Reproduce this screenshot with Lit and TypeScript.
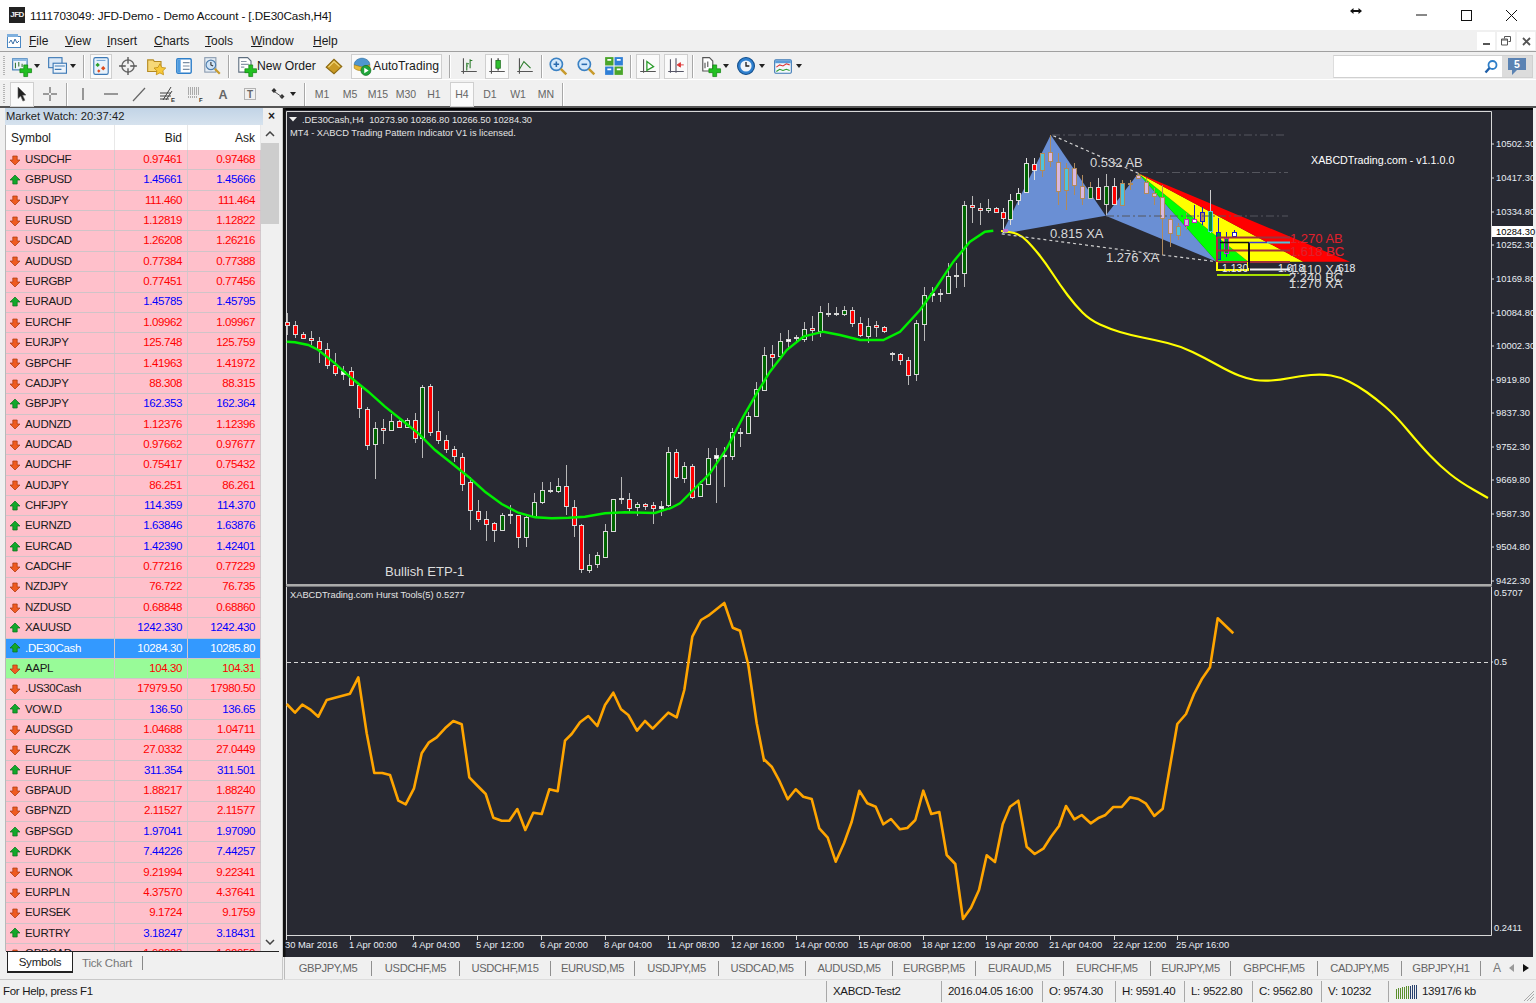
import { LitElement, html, svg, css } from "lit";
import { customElement } from "lit/decorators.js";

type Row = [string, string, string, "u" | "d", string?];
const ROWS: Row[] = [
  ["USDCHF","0.97461","0.97468","d"],["GBPUSD","1.45661","1.45666","u"],["USDJPY","111.460","111.464","d"],
  ["EURUSD","1.12819","1.12822","d"],["USDCAD","1.26208","1.26216","d"],["AUDUSD","0.77384","0.77388","d"],
  ["EURGBP","0.77451","0.77456","d"],["EURAUD","1.45785","1.45795","u"],["EURCHF","1.09962","1.09967","d"],
  ["EURJPY","125.748","125.759","d"],["GBPCHF","1.41963","1.41972","d"],["CADJPY","88.308","88.315","d"],
  ["GBPJPY","162.353","162.364","u"],["AUDNZD","1.12376","1.12396","d"],["AUDCAD","0.97662","0.97677","d"],
  ["AUDCHF","0.75417","0.75432","d"],["AUDJPY","86.251","86.261","d"],["CHFJPY","114.359","114.370","u"],
  ["EURNZD","1.63846","1.63876","u"],["EURCAD","1.42390","1.42401","u"],["CADCHF","0.77216","0.77229","d"],
  ["NZDJPY","76.722","76.735","d"],["NZDUSD","0.68848","0.68860","d"],["XAUUSD","1242.330","1242.430","u"],
  [".DE30Cash","10284.30","10285.80","u","sel"],["AAPL","104.30","104.31","d","grn"],[".US30Cash","17979.50","17980.50","d"],
  ["VOW.D","136.50","136.65","u"],["AUDSGD","1.04688","1.04711","d"],["EURCZK","27.0332","27.0449","d"],
  ["EURHUF","311.354","311.501","u"],["GBPAUD","1.88217","1.88240","d"],["GBPNZD","2.11527","2.11577","d"],
  ["GBPSGD","1.97041","1.97090","u"],["EURDKK","7.44226","7.44257","u"],["EURNOK","9.21994","9.22341","d"],
  ["EURPLN","4.37570","4.37641","d"],["EURSEK","9.1724","9.1759","d"],["EURTRY","3.18247","3.18431","u"],
  ["GBPCAD","1.92023","1.92050","d"],
];

// [wickTop, bodyTop, bodyBottom, wickBottom, kind]
const CA: [number,number,number,number,string][] = [
[40,65,75,105,"r"],[62,75,103,115,"r"],[97,103,115,118,"r"],[93,115,121,135,"r"],[112,122,147,190,"r"],[130,146,195,208,"r"],
[160,195,220,228,"r"],[197,212,220,240,"w"],[200,213,256,258,"r"],[256,256,326,355,"r"],[320,326,433,450,"r"],[365,384,431,538,"g"],
[358,384,390,432,"r"],[342,362,388,392,"g"],[360,362,379,385,"r"],[355,360,380,385,"g"],[340,359,412,428,"r"],[255,262,415,474,"g"],
[252,259,398,408,"r"],[332,393,421,432,"r"],[405,421,448,458,"r"],[438,448,470,485,"r"],[458,470,550,572,"r"],[530,546,631,690,"r"],
[600,632,656,665,"r"],[633,656,672,722,"r"],[665,668,690,727,"r"],[640,644,690,692,"g"],[615,642,645,672,"w"],[645,646,711,745,"r"],
[648,650,711,740,"g"],[580,607,648,650,"g"],[545,571,607,612,"g"],[545,571,575,580,"w"],[535,559,574,580,"g"],[495,559,620,645,"r"],
[600,620,675,710,"r"],[672,675,808,818,"r"],[762,796,811,818,"g"],[757,766,793,805,"g"],[673,693,770,772,"g"],[597,598,693,695,"g"],
[530,595,598,612,"w"],[580,596,622,635,"r"],[605,613,622,648,"g"],[610,611,616,630,"r"],[607,616,625,672,"r"],[603,619,625,648,"w"],
];
const CB: [number,number,number,number,string][] = [
[770,787,947,950,"g"],[778,787,862,868,"r"],[815,827,862,880,"g"],[822,827,920,928,"r"],[872,882,918,920,"g"],[775,805,882,885,"g"],
[775,796,806,938,"w"],[770,796,800,890,"w"],[715,727,800,810,"g"],[715,727,730,770,"w"],[665,677,727,730,"g"],[575,596,678,680,"g"],
[472,494,598,600,"g"],[465,493,502,540,"r"],[430,452,498,500,"g"],[420,446,452,475,"w"],[435,441,445,455,"w"],[395,416,445,455,"g"],
[377,415,421,452,"r"],[347,366,422,442,"g"],[340,368,370,380,"w"],[352,370,373,378,"w"],[347,360,373,378,"g"],[352,360,400,410,"r"],
[380,400,436,442,"r"],[385,407,436,458,"g"],[393,406,411,440,"r"],[408,412,424,430,"r"],
[487,490,492,513,"w"],[490,493,510,525,"r"],[500,510,555,585,"r"],[390,400,553,572,"g"],[292,314,400,452,"g"],[290,308,314,335,"w"],
[298,308,311,335,"w"],[220,258,308,308,"g"],[220,254,258,293,"w"],[32,46,250,290,"g"],[17,46,52,100,"r"],[40,55,60,105,"r"],[27,55,60,70,"g"],
[52,55,67,70,"r"],
];
const TAN = "#b08a5c";
// [x, wickTop, bodyTop, bodyBottom, wickBottom, fill, border, wick]
const CC: [number,number,number,number,number,string,string,string][] = [
[9,250,262,280,325,"#f00","#ddd","#ddd"],[31,208,225,282,300,"#006400","#ddd","#ddd"],[55,190,203,225,240,"#006400","#ddd","#ddd"],
[79,100,115,203,205,"#006400","#ddd","#ddd"],[103,100,118,135,165,"#f00","#ddd","#ddd"],[127,85,85,135,155,"#4fc3dc",TAN,TAN],
[151,30,82,110,125,"#d8b8e0",TAN,TAN],[175,85,110,197,240,"#d8b8e0",TAN,TAN],[199,115,130,197,255,"#4fc3dc",TAN,TAN],
[223,115,130,182,210,"#d8b8e0",TAN,TAN],[247,150,182,218,240,"#d8b8e0",TAN,TAN],[271,170,185,218,220,"#006400","#bbb",TAN],
[295,160,185,222,225,"#f00","#ddd","#ccc"],[319,148,182,235,270,"#006400","#ccc","#bbb"],[343,160,182,235,240,"#f00","#ddd","#ccc"],
[367,165,175,240,240,"#4fc3dc",TAN,TAN],[391,165,175,178,195,"#fff",TAN,TAN],[415,145,150,160,162,"#d8b8e0",TAN,TAN],
[437,160,170,203,205,"#d8b8e0",TAN,TAN],[461,190,205,215,240,"#d8b8e0",TAN,TAN],[485,180,215,278,390,"#d8b8e0",TAN,TAN],
[509,270,282,325,365,"#d8b8e0",TAN,TAN],[533,295,302,330,345,"#4fc3dc",TAN,TAN],[557,265,283,300,315,"#d8b8e0","#d020d0",TAN],
[581,240,282,290,295,"#fff","#d020d0","#1c1cc8"],[605,245,260,288,300,TAN,"#1c1cc8","#1c1cc8"],[629,195,258,318,325,"#0a8a3c","#4fc3dc","#ccc"],
[653,278,320,400,345,"#0a8a3c","#1c1cc8","#1c1cc8"],[677,320,340,385,395,"#0a8a3c","#d020d0","#1c1cc8"],[701,315,320,332,340,"#fff","#1c1cc8","#1c1cc8"],
];

const GREEN_A = [[5,125],[30,127],[70,135],[100,150],[150,190],[200,235],[250,275],[300,320],[350,360],[400,400],[450,450],[500,490],[550,530],[600,575],[650,612],[700,638],[750,652],[800,655],[850,653],[900,650],[960,640],[1020,637],[1110,639],[1150,626]];
const GREEN_B = [[25,958],[60,940],[100,900],[150,850],[200,775],[250,680],[290,610],[330,545],[380,480],[430,440],[490,425],[540,435],[600,450],[670,450],[720,425],[780,360],[830,290],[880,215],[930,155],[975,125],[1000,122]];
const YELLOW = [[1001,231],[1012,232],[1022,236],[1032,246],[1045,262],[1060,285],[1075,305],[1090,320],[1110,329],[1130,335],[1155,340],[1180,346],[1205,358],[1230,372],[1248,379],[1262,381],[1280,380],[1300,376],[1322,374],[1340,377],[1358,386],[1375,398],[1395,415],[1420,445],[1440,466],[1460,482],[1488,498]];
const ORANGE_A = [[5,342],[30,368],[52,344],[75,358],[100,380],[125,330],[150,323],[195,311],[220,262],[245,430],[268,549],[292,549],[315,555],[340,632],[362,643],[387,595],[410,490],[432,457],[455,442],[480,415],[505,393],[530,403],[553,562],[578,588],[602,612],[625,683],[650,692],[673,692],[697,657],[721,720],[745,668],[770,672],[793,598],[818,604],[840,452],[860,432],[885,397],[910,378],[937,408],[960,345],[985,308],[1008,358],[1030,375],[1056,422],[1080,393],[1103,416],[1150,368],[1175,382],[1198,300],[1222,140],[1248,90],[1270,77],[1318,39],[1343,113],[1365,122],[1390,225],[1415,400],[1438,515]];
const ORANGE_B = [[12,508],[35,530],[58,572],[83,628],[107,598],[130,620],[155,627],[178,715],[203,743],[227,815],[252,760],[275,695],[298,602],[322,640],[347,650],[370,703],[393,687],[420,718],[442,714],[466,690],[490,602],[514,672],[538,666],[560,795],[586,822],[609,987],[633,953],[657,900],[680,796],[705,816],[728,703],[750,650],[775,632],[800,770],[824,792],[850,776],[873,740],[897,708],[918,648],[943,688],[965,675],[992,700],[1017,683],[1035,676],[1060,651],[1085,651],[1110,622],[1135,627],[1157,640],[1183,678],[1208,656],[1252,402],[1278,372],[1302,312],[1325,268],[1350,232],[1373,85],[1420,130]];

const zp = (a: number[][], ox: number, oy: number) => a.map(([x, y]) => `${(ox + x / 3).toFixed(1)},${(oy + y / 3).toFixed(1)}`).join(" ");
const Z7 = (x: number, y: number) => `${(1000 + x / 3).toFixed(1)},${(125 + y / 3).toFixed(1)}`;
const smooth = (a: number[][]) => {
  let d = `M${a[0][0]} ${a[0][1]}`;
  for (let i = 1; i < a.length - 1; i++) {
    const mx = (a[i][0] + a[i + 1][0]) / 2, my = (a[i][1] + a[i + 1][1]) / 2;
    d += `Q${a[i][0]} ${a[i][1]} ${mx} ${my}`;
  }
  const l = a[a.length - 1];
  return `${d}L${l[0]} ${l[1]}`;
};

const FILL: Record<string, string> = { r: "#ff0000", g: "#006400", w: "#ffffff" };
const candle = (x: number, wt: number, bt: number, bb: number, wb: number, fill: string, border: string, wick: string) => {
  const cx = Math.round(x) + 0.5;
  const t = Math.round(bt) + 0.5, h = Math.max(1, Math.round(bb - bt));
  return svg`<line x1=${cx} x2=${cx} y1=${wt} y2=${wb} stroke=${wick}></line><rect x=${cx - 2} y=${t} width="4" height=${h} fill=${fill} stroke=${border}></rect>`;
};

const PRICES: [string, number][] = [["10502.30",144],["10417.30",178],["10334.80",212],["10252.30",245],["10169.80",279],["10084.80",313],["10002.30",346],["9919.80",380],["9837.30",413],["9752.30",447],["9669.80",480],["9587.30",514],["9504.80",547],["9422.30",581]];
const TIMES: [string, number][] = [["30 Mar 2016",285],["1 Apr 00:00",349],["4 Apr 04:00",412],["5 Apr 12:00",476],["6 Apr 20:00",540],["8 Apr 04:00",604],["11 Apr 08:00",667],["12 Apr 16:00",731],["14 Apr 00:00",795],["15 Apr 08:00",858],["18 Apr 12:00",922],["19 Apr 20:00",985],["21 Apr 04:00",1049],["22 Apr 12:00",1113],["25 Apr 16:00",1176]];
const TABS: [string, number][] = [["GBPJPY,M5",87],["USDCHF,M5",88],["USDCHF,M15",91],["EURUSD,M5",84],["USDJPY,M5",84],["USDCAD,M5",87],["AUDUSD,M5",87],["EURGBP,M5",83],["EURAUD,M5",88],["EURCHF,M5",87],["EURJPY,M5",80],["GBPCHF,M5",87],["CADJPY,M5",84],["GBPJPY,H1",79]];
const STATUS: [string, number][] = [["XABCD-Test2",115],["2016.04.05 16:00",101],["O: 9574.30",73],["H: 9591.40",69],["L: 9522.80",68],["C: 9562.80",69],["V: 10232",67]];
const MENU: [string, string, number][] = [["F","ile",36],["V","iew",42],["I","nsert",47],["C","harts",51],["T","ools",46],["W","indow",62],["H","elp",40]];

const plus = svg`<path d="M11.500 8h3.500v3.500h3.500V15H15v3.500h-3.500V15H8v-3.500h3.500z" fill="#22c022" stroke="#0c7c0c" stroke-width=".6"/>`;
const ICONS: Record<string, unknown> = {
  newChart: svg`<rect x="1.500" y="2.500" width="13" height="10" fill="#eef4fb" stroke="#3b78b5"/><path d="M1.500 2.500h13v2h-13z" fill="#8fbbe4"/><path d="M4 6v5M7 5.500v4M10 7v3" stroke="#3b7a3b"/>${plus}`,
  profiles: svg`<rect x="1.500" y="1.500" width="12" height="9" fill="#dbe8f6" stroke="#3b78b5"/><rect x="5.500" y="6.500" width="12" height="9" fill="#eef4fb" stroke="#3b78b5"/><path d="M7 9h9M7 12h6" stroke="#3b78b5"/>`,
  watch: svg`<rect x="2.500" y="1.500" width="13" height="15" rx="1.500" fill="#e8f2fb" stroke="#3b78b5"/><path d="M5 4h8" stroke="#7aa9d6"/><path d="M6 6l2 2-2 2-2-2z" fill="#2aa02a"/><path d="M11 9l2 2-2 2-2-2z" fill="#e04a1a"/><path d="M7 12l1.500 1.500L7 15l-1.500-1.500z" fill="#e04a1a"/>`,
  cross: svg`<circle cx="9" cy="9" r="5.500" fill="none" stroke="#666" stroke-width="1.200"/><path d="M9 1v6M9 11v6M1 9h6M11 9h6" stroke="#555" stroke-width="1.200"/>`,
  fav: svg`<path d="M1.500 3.500h5l1 1.500h6v9h-12z" fill="#f6d878" stroke="#b48a22"/><path d="M12.500 7l1.700 3.300 3.600.5-2.600 2.500.6 3.600-3.300-1.700-3.300 1.700.6-3.600-2.600-2.500 3.600-.5z" fill="#f7c93a" stroke="#c08d10" stroke-width=".7"/>`,
  nav: svg`<rect x="2.500" y="2.500" width="13" height="13" rx="1" fill="#fff" stroke="#2f7fc9" stroke-width="1.300"/><rect x="3" y="3" width="3" height="12" fill="#4e9be0"/><path d="M8 6h6M8 9h6M8 12h6" stroke="#7a8ea4"/>`,
  tester: svg`<rect x="2.500" y="1.500" width="10" height="13" fill="#e6edf4" stroke="#8a9bb0"/><circle cx="8" cy="8" r="4.300" fill="#cfe3f6" stroke="#4f7fae"/><path d="M8 5.500V8l2 1" stroke="#333" fill="none"/><path d="M11.500 11.500l4.500 4.500" stroke="#c79a2c" stroke-width="2"/>`,
  order: svg`<path d="M2.500 1.500h8l3 3v10h-11z" fill="#fff" stroke="#5f6f80"/><path d="M4.500 5h5M4.500 7.500h7M4.500 10h3" stroke="#8a98a8"/>${plus}`,
  gold: svg`<path d="M2 10l7-7 7 6.500-7 6.500z" fill="#c99a25" stroke="#8c6a12"/><path d="M4 10l5-5 5 4.600" fill="none" stroke="#f2d77a"/>`,
  auto: svg`<path d="M2 8c0-4 4-6 7-6s7 2 7 6l-7 2z" fill="#4f96cf" stroke="#2a6b9e" stroke-width=".6"/><path d="M2 8l7 2 7-2v3c-3 3-11 3-14 0z" fill="#e8bb3a" stroke="#a77e14" stroke-width=".6"/><circle cx="12.500" cy="13" r="4.500" fill="#1fa63a" stroke="#0e6a20" stroke-width=".6"/><path d="M11 10.500l4 2.500-4 2.500z" fill="#fff"/>`,
  bars: svg`<path d="M4 2v14M2 14h14" stroke="#555" fill="none"/><path d="M7 6v7M7 7h2M10 3v8M10 4h2M8 9h-1" stroke="#2d7d2d" fill="none"/>`,
  candles: svg`<path d="M4 2v14M2 14h14" stroke="#555" fill="none"/><path d="M10 2v11" stroke="#222"/><rect x="8" y="4" width="4" height="7" fill="#2fbf2f" stroke="#1c6e1c" stroke-width=".7"/>`,
  line: svg`<path d="M4 2v14M2 14h14" stroke="#555" fill="none"/><path d="M4 12l4-7 6 6" stroke="#2d7d2d" fill="none"/>`,
  zoomIn: svg`<circle cx="7.500" cy="7.500" r="5.500" fill="#d4e9fb" stroke="#3b82c4" stroke-width="1.500"/><path d="M5 7.500h5M7.500 5v5" stroke="#2a6cb0" stroke-width="1.400"/><path d="M11.500 11.500l5 5" stroke="#c79a2c" stroke-width="2.200"/>`,
  zoomOut: svg`<circle cx="7.500" cy="7.500" r="5.500" fill="#d4e9fb" stroke="#3b82c4" stroke-width="1.500"/><path d="M5 7.500h5" stroke="#2a6cb0" stroke-width="1.400"/><path d="M11.500 11.500l5 5" stroke="#c79a2c" stroke-width="2.200"/>`,
  tile: svg`<rect x="1" y="1" width="7.500" height="7.500" fill="#4aa52a"/><rect x="9.500" y="1" width="7.500" height="7.500" fill="#2f7fd6"/><rect x="1" y="9.500" width="7.500" height="7.500" fill="#2f7fd6"/><rect x="9.500" y="9.500" width="7.500" height="7.500" fill="#4aa52a"/><path d="M3 3.500h3.500M11.500 3.500H15M3 12h3.500M11.500 12H15" stroke="#fff" stroke-width="1.600"/>`,
  shift: svg`<path d="M5 3v12M2 14h14" stroke="#555" fill="none"/><path d="M8 5l6 4.500L8 13z" fill="#fff" stroke="#2d9d2d" stroke-width="1.200"/>`,
  scroll: svg`<path d="M4 3v12M9 2v13M2 14h14" stroke="#556" fill="none"/><path d="M16 8h-3M13 6l-3 2 3 2z" fill="#d33" stroke="#d33" stroke-width=".8"/>`,
  newDoc: svg`<path d="M2.500 1.500h6l3 3v9h-9z" fill="#fff" stroke="#555"/><path d="M4.500 6v5M7 5v5" stroke="#555"/>${plus}`,
  clock: svg`<circle cx="9" cy="9" r="7.600" fill="#2f80cf" stroke="#144f8c"/><circle cx="9" cy="9" r="5" fill="#eef4fa"/><path d="M9 5.500V9h3" stroke="#222" stroke-width="1.200" fill="none"/>`,
  tmpl: svg`<rect x="1.500" y="3.500" width="15" height="12" rx="1" fill="#f4f8fc" stroke="#3b78b5"/><rect x="2" y="4" width="14" height="2.500" fill="#5b9bd8"/><path d="M3 10l3-2 3 1 3-2 3 1" stroke="#d33" fill="none"/><path d="M3 14l3-2 3 1 3-1 3 1" stroke="#2c9c2c" fill="none"/>`,
  arrow: svg`<path d="M5 2l8 8-3.400.2 2.300 5-2 .9-2.200-5L5 13.500z" fill="#222" stroke="#666" stroke-width=".6"/>`,
  hair: svg`<path d="M9 2v6M9 10v6M2 9h6M10 9h6" stroke="#444"/>`,
  vline: svg`<path d="M9 3v12" stroke="#666" stroke-width="1.300"/>`,
  hline: svg`<path d="M2 9h14" stroke="#666" stroke-width="1.300"/>`,
  tline: svg`<path d="M3 16L15 3" stroke="#666" stroke-width="1.200"/>`,
  fib: svg`<path d="M2 11h11M2 8h11M2 14h9M5 15L13 2M8 15l6-9" stroke="#444"/><text x="13" y="17" font-size="6" font-weight="700" font-family="Liberation Sans" fill="#333">E</text>`,
  grid: svg`<path d="M2 3h12M2 5h12M2 7h12M2 9h12M2 12h10" stroke="#666" stroke-dasharray="1 1"/><text x="13" y="17" font-size="6" font-weight="700" font-family="Liberation Sans" fill="#333">F</text>`,
  letterA: svg`<text x="4.500" y="14" font-size="12.500" font-weight="700" font-family="Liberation Sans" fill="#666">A</text>`,
  letterT: svg`<rect x="3.500" y="3.500" width="11" height="11" fill="none" stroke="#777" stroke-dasharray="1 1"/><text x="6" y="13" font-size="10" font-weight="700" font-family="Liberation Sans" fill="#666">T</text>`,
  shapes: svg`<path d="M5 3l2.500 2.500L5 8 2.500 5.500zM13 9l2.500 2.500L13 14l-2.500-2.500z" fill="#333"/><path d="M6 7l7 5" stroke="#555"/>`,
};

@customElement("app-root")
export class AppRoot extends LitElement {
  static styles = css`
    :host { display: grid; grid-template-rows: 30px 22px 28px 28px 872px 23px; width: 1536px; height: 1003px; overflow: hidden;
      font: 12px/1 "Liberation Sans", Arial, sans-serif; color: #1a1a1a; background: #f0f0f0; }
    .title { background: #fff; display: flex; align-items: center; }
    .logo { width: 16px; height: 16px; margin-left: 9px; background: #222; color: #eee; font-size: 8px; font-weight: 700; display: flex; align-items: center; justify-content: center; letter-spacing: -.5px; }
    .title-text { margin-left: 5px; padding-top: 1px; font-size: 11.7px; flex: 1; color: #111; letter-spacing: -.1px; }
    .wc { display: flex; align-items: center; margin-right: 2px; }
    .wc svg { display: block; }
    .resize { margin-right: 36px; margin-top: -9px; }
    .wbtn { width: 45px; height: 30px; display: flex; align-items: center; justify-content: center; }
    .menu { display: flex; align-items: center; border-bottom: 1px solid #a0a0a0; box-sizing: border-box; padding-top: 1px; }
    .menu .app { margin: 0 7px 0 6px; display: block; }
    .mi { color: #1a1a1a; }
    .mdi { margin-left: auto; display: flex; gap: 2px; margin-right: 1px; }
    .mdi span { width: 18px; height: 18px; background: #fff; display: flex; align-items: center; justify-content: center; }
    .tb { display: flex; align-items: center; box-sizing: border-box; position: relative; }
    .tb1 { border-bottom: 1px solid #fff; padding-top: 1px; }
    .tb2 { border-bottom: 2px solid #555; padding-top: 2px; }
    .grip { width: 8px; height: 22px; flex: none; position: relative; }
    .grip::before { content: ""; position: absolute; left: 3px; top: 1px; bottom: 1px; width: 2px; background: repeating-linear-gradient(#b4b4b4 0 1px, transparent 1px 2px); }
    .it { flex: none; height: 26px; display: flex; align-items: center; box-sizing: border-box; position: relative; color: #1a1a1a; }
    .it svg { display: block; flex: none; overflow: visible; }
    .it.ctr { justify-content: center; }
    .it.press { background: #fafafa; border: 1px solid #cfcfcf; height: 25px; margin: 0 2px; }
    .sep { flex: none; height: 24px; position: relative; }
    .sep::before { content: ""; position: absolute; left: 50%; top: 1px; bottom: 0; width: 2px; margin-left: -1px; background: linear-gradient(90deg, #a8a8a8 50%, #fff 50%); }
    .dd { width: 0; height: 0; border: 3px solid transparent; border-top: 4px solid #222; border-bottom: 0; margin-left: 3px; flex: none; }
    .lbl { margin-left: 1px; font-size: 12.2px; white-space: nowrap; }
    .tf { color: #666; font-size: 10.5px; }
    .search { position: absolute; left: 1333px; top: 3px; width: 200px; height: 23px; display: flex; border: 1px solid #d0d0d0; border-left-color: #ddd; box-sizing: border-box; background: #fff; }
    .search .box { flex: 1; display: flex; align-items: center; justify-content: flex-end; padding-right: 3px; }
    .search .bal { width: 30px; background: #dcdcdc; display: flex; align-items: center; justify-content: center; position: relative; }
    .main { display: flex; min-height: 0; }
    .watch { width: 283px; flex: none; display: flex; flex-direction: column; box-sizing: border-box; padding: 0 3px 3px 5px; border-right: 1px solid #c8c8c8; border-bottom: 1px solid #c8c8c8; }
    .w-title { height: 17px; flex: none; display: flex; align-items: center; justify-content: space-between; background: linear-gradient(#c2d4e6, #d6e2ee); margin-right: -1px; padding-left: 1px; font-size: 11.2px; color: #222; }
    .w-x { width: 17px; height: 17px; background: #f0f0f0; text-align: center; line-height: 17px; font-weight: 700; font-size: 12px; }
    .w-body { flex: 1; min-height: 0; display: flex; }
    .tbl { width: 256px; flex: none; overflow: hidden; background: #fff; display: flex; flex-direction: column; border-left: 1px solid #b8b8b8; box-sizing: border-box; }
    .hd, .row { display: grid; grid-template-columns: 109px 73px 73px; }
    .hd { height: 25px; flex: none; align-items: center; }
    .hd div { padding: 0 5px; height: 100%; display: flex; align-items: center; box-sizing: border-box; border-right: 1px solid #e8e8e8; font-size: 12px; }
    .hd .n { justify-content: flex-end; }
    .rows { flex: 1; min-height: 0; overflow: hidden; }
    .row { height: 20.37px; background: #ffc0cb; box-sizing: border-box; border-bottom: 1px solid #d0c4c8; align-items: center; font-size: 11.5px; letter-spacing: -.4px; }
    .row > div { height: 100%; display: flex; align-items: center; box-sizing: border-box; border-right: 1px solid #d4c8cc; padding: 0 5px; white-space: nowrap; overflow: hidden; }
    .row .sym { padding-left: 3px; gap: 4px; color: #1a1a1a; letter-spacing: -.3px; }
    .row .sym svg { display: block; flex: none; }
    .row .n { justify-content: flex-end; }
    .up { color: #0000ff; } .dn { color: #ff0000; }
    .row.sel { background: #3399ff; } .row.sel > div { color: #fff; }
    .row.grn { background: #98fb98; }
    .scr { width: 18px; flex: none; display: flex; flex-direction: column; }
    .scr .ar { height: 18px; display: flex; align-items: center; justify-content: center; flex: none; }
    .scr .thumb { height: 81px; background: #cdcdcd; flex: none; }
    .scr .sp { flex: 1; }
    .w-tabs { height: 24px; flex: none; border-top: 1px solid #222; display: flex; align-items: flex-start; margin-left: 1px; font-size: 11.5px; letter-spacing: -.2px; }
    .tab-on { width: 64px; height: 19px; background: #fff; border: 1px solid #222; border-top: 0; border-bottom-width: 2px; margin-left: 1px; text-align: center; line-height: 21px; box-sizing: content-box; }
    .tab-off { margin-left: 9px; color: #777; padding-right: 10px; border-right: 1px solid #888; height: 14px; margin-top: 4px; line-height: 14px; }
    .right { flex: 1; min-width: 0; display: flex; flex-direction: column; }
    .chart { display: block; width: 1253px; height: 849px; flex: none; }
    .chart text { font-family: "Liberation Sans", Arial, sans-serif; font-size: 9.3px; fill: #e4e4e4; }
    .chart .ax { font-size: 9.4px; fill: #e8eef4; }
    .chart .big { font-size: 13px; fill: #d8d8d8; }
    .chart .rd { font-size: 13px; fill: #e0202c; }
    .chart .ttl { font-size: 10.7px; fill: #fff; }
    .chart .cur { fill: #000; font-size: 9.4px; }
    .chart .bull { font-size: 13.1px; fill: #ddd; }
    .chart .sm { font-size: 10.5px; }
    .tabs { flex: 1; display: flex; align-items: center; border-left: 1px solid #bbb; border-bottom: 1px solid #ddd; margin-left: 1px; box-sizing: border-box; overflow: hidden; }
    .t { flex: none; height: 15px; line-height: 15px; text-align: center; color: #666; border-right: 1px solid #8f8f8f; box-sizing: border-box; font-size: 11.2px; letter-spacing: -.3px; }
    .t-end { flex: 1; display: flex; align-items: center; color: #777; padding-left: 12px; gap: 8px; height: 15px; }
    .status { display: flex; align-items: center; font-size: 11.5px; letter-spacing: -.3px; background: #f0f0f0; position: relative; }
    .st-help { width: 826px; padding-left: 3px; box-sizing: border-box; flex: none; }
    .st { flex: none; height: 21px; display: flex; align-items: center; padding-left: 6px; box-sizing: border-box; border-left: 1px solid #a8a8a8; white-space: nowrap; gap: 5px; }
    .grip-r { position: absolute; right: 1px; bottom: 1px; display: block; }
  `;

  private ic(name: string, size = 18) {
    return html`<svg width=${size} height=${size} viewBox="0 0 18 18">${ICONS[name]}</svg>`;
  }

  private item(w: number, icon: string, opt: { press?: boolean; dd?: boolean; label?: string; pad?: number; size?: number } = {}) {
    const cls = `it ${opt.press ? "press" : ""} ${opt.dd || opt.label ? "" : "ctr"}`;
    const width = opt.press ? w - 4 : w;
    const pad = opt.dd || opt.label ? (opt.pad ?? 3) : 0;
    return html`<div class=${cls} style="width:${width}px;padding-left:${pad}px">${this.ic(icon, opt.size ?? 20)}${opt.label ? html`<span class="lbl">${opt.label}</span>` : ""}${opt.dd ? html`<span class="dd"></span>` : ""}</div>`;
  }
  private sep(w: number) { return html`<div class="sep" style="width:${w}px"></div>`; }
  private tf(t: string, press = false) {
    return html`<div class="it ctr tf ${press ? "press" : ""}" style="width:${press ? 24 : 28}px">${t}</div>`;
  }

  private renderToolbars() {
    return html`
      <div class="tb tb1">
        <div class="grip"></div>
        ${this.item(36, "newChart", { dd: true })}${this.item(36, "profiles", { dd: true })}
        ${this.sep(8)}
        ${this.item(26, "watch", { press: true })}
        ${this.item(28, "cross")}${this.item(28, "fav")}${this.item(28, "nav")}${this.item(28, "tester")}
        ${this.sep(6)}
        ${this.item(87, "order", { label: "New Order", pad: 4 })}
        ${this.item(30, "gold")}
        ${this.item(95, "auto", { press: true, label: "AutoTrading", pad: 0 })}
        ${this.sep(11)}
        ${this.item(28, "bars")}${this.item(28, "candles", { press: true })}${this.item(28, "line")}
        ${this.sep(5)}
        ${this.item(28, "zoomIn")}${this.item(28, "zoomOut")}${this.item(28, "tile")}
        ${this.sep(6)}
        ${this.item(28, "shift", { press: true })}${this.item(28, "scroll", { press: true })}
        ${this.sep(6)}
        ${this.item(36, "newDoc", { dd: true, pad: 4 })}${this.item(36, "clock", { dd: true, pad: 4 })}${this.item(38, "tmpl", { dd: true, pad: 5 })}
        <div class="search">
          <div class="box"><svg width="16" height="16" viewBox="0 0 16 16"><circle cx="9.500" cy="6" r="4" fill="#fff" stroke="#2f7fc9" stroke-width="1.800"/><path d="M6.500 9l-4 4.500" stroke="#1f5fa8" stroke-width="2.400"/></svg></div>
          <div class="bal"><svg width="22" height="20" viewBox="0 0 22 20"><path d="M2 1h18v12H11l-5 5v-5H2z" fill="#5b83b3"/><text x="11" y="11" text-anchor="middle" font-size="10.500" font-weight="700" font-family="Liberation Sans" fill="#fff">5</text></svg></div>
        </div>
      </div>
      <div class="tb tb2">
        <div class="grip"></div>
        ${this.item(28, "arrow", { press: true, size: 18 })}${this.item(28, "hair", { size: 18 })}
        ${this.sep(5)}
        ${this.item(28, "vline", { size: 18 })}${this.item(28, "hline", { size: 18 })}${this.item(28, "tline", { size: 18 })}${this.item(28, "fib", { size: 18 })}${this.item(28, "grid", { size: 18 })}${this.item(27, "letterA", { size: 18 })}${this.item(28, "letterT", { size: 18 })}
        ${this.item(38, "shapes", { dd: true, pad: 5, size: 18 })}
        ${this.sep(6)}
        ${this.tf("M1")}${this.tf("M5")}${this.tf("M15")}${this.tf("M30")}${this.tf("H1")}${this.tf("H4", true)}${this.tf("D1")}${this.tf("W1")}${this.tf("MN")}
        ${this.sep(6)}
      </div>`;
  }

  private renderWatch() {
    const up = html`<svg width="12" height="12" viewBox="0 0 12 12"><path d="M6 1l5 5H8.200v4H3.800V6H1z" fill="#12a82a" stroke="#0c6e1c" stroke-width=".7"/></svg>`;
    const dn = html`<svg width="12" height="12" viewBox="0 0 12 12"><path d="M6 11L1 6h2.800V2h4.400v4H11z" fill="#ef5a20" stroke="#a8380c" stroke-width=".7"/></svg>`;
    return html`<div class="watch">
      <div class="w-title"><span>Market Watch: 20:37:42</span><span class="w-x">×</span></div>
      <div class="w-body">
        <div class="tbl">
          <div class="hd"><div>Symbol</div><div class="n">Bid</div><div class="n">Ask</div></div>
          <div class="rows">
            ${ROWS.map(([s, b, a, d, k]) => html`<div class="row ${k ?? ""}">
              <div class="sym">${d === "u" ? up : dn}<span>${s}</span></div>
              <div class="n ${d === "u" ? "up" : "dn"}">${b}</div>
              <div class="n ${d === "u" ? "up" : "dn"}">${a}</div>
            </div>`)}
          </div>
        </div>
        <div class="scr">
          <div class="ar"><svg width="10" height="6" viewBox="0 0 10 6"><path d="M1 5l4-4 4 4" fill="none" stroke="#444" stroke-width="1.500"/></svg></div>
          <div class="thumb"></div><div class="sp"></div>
          <div class="ar"><svg width="10" height="6" viewBox="0 0 10 6"><path d="M1 1l4 4 4-4" fill="none" stroke="#444" stroke-width="1.500"/></svg></div>
        </div>
      </div>
      <div class="w-tabs"><div class="tab-on">Symbols</div><div class="tab-off">Tick Chart</div></div>
    </div>`;
  }

  private renderChart() {
    const C = Z7(415, 145);
    const dots = "3 3";
    const candlesA = CA.map((c, i) => candle(285 + (7 + i * 23.85) / 3, 300 + c[0] / 3, 300 + c[1] / 3, 300 + c[2] / 3, 300 + c[3] / 3, FILL[c[4]], "#d8d8d8", "#b8b8b8"));
    const candlesB = CB.map((c, j) => candle(660 + (25 + j * 24) / 3, 190 + c[0] / 3, 190 + c[1] / 3, 190 + c[2] / 3, 190 + c[3] / 3, FILL[c[4]], "#d8d8d8", "#b8b8b8"));
    const candlesC = CC.map((c) => candle(1000 + c[0] / 3, 125 + c[1] / 3, 125 + c[2] / 3, 125 + c[3] / 3, 125 + c[4] / 3, c[5], c[6], c[7]));
    const hl = (y: number, x1: number, x2: number, col: string, w = 1, dash = "") => svg`<line x1=${x1} x2=${x2} y1=${y} y2=${y} stroke=${col} stroke-width=${w} stroke-dasharray=${dash}></line>`;
    return html`<svg class="chart" viewBox="283 108 1253 849">
      <rect x="283" y="108" width="1250" height="849" fill="#282932"></rect>
      <rect x="283" y="108" width="1250" height="2" fill="#000"></rect>
      <rect x="283" y="108" width="2.500" height="849" fill="#111"></rect>
      <path d="M286.500 584V111.500H1491.500V584" fill="none" stroke="#d8d8d8"></path>
      <rect x="286" y="584" width="1206" height="2.600" fill="#aaa"></rect>
      <path d="M286.500 587V935.500H1491.500V587" fill="none" stroke="#d8d8d8"></path>

      ${svg`<path d="M289 117h8l-4 4.500z" fill="#f0f0f0"></path>`}
      <text x="302" y="123">.DE30Cash,H4&nbsp; 10273.90 10286.80 10266.50 10284.30</text>
      <text x="290" y="136">MT4 - XABCD Trading Pattern Indicator V1 is licensed.</text>
      <text x="1311" y="164" class="ttl">XABCDTrading.com - v1.1.0.0</text>
      <text x="385" y="576" class="bull">Bullish ETP-1</text>
      <text x="290" y="598">XABCDTrading.com Hurst Tools(5) 0.5277</text>

      ${svg`
        <polygon points="${Z7(5,327)} ${Z7(152,30)} ${Z7(317,272)}" fill="#6a8fd4"></polygon>
        <polygon points="${Z7(317,272)} ${C} ${Z7(650,410)}" fill="#6a8fd4"></polygon>
        <polygon points="${C} ${Z7(650,410)} ${Z7(745,410)}" fill="#00ff00"></polygon>
        <polygon points="${C} ${Z7(745,410)} ${Z7(910,410)}" fill="#ffff00"></polygon>
        <polygon points="${C} ${Z7(910,410)} ${Z7(1050,410)}" fill="#ff0000"></polygon>
      `}
      <g shape-rendering="crispEdges">${candlesA}${candlesB}${candlesC}</g>
      <polyline points=${zp(GREEN_A, 285, 300)} fill="none" stroke="#00f000" stroke-width="2.400"></polyline>
      <polyline points=${zp(GREEN_B, 660, 190)} fill="none" stroke="#00f000" stroke-width="2.400"></polyline>
      <path d=${smooth(YELLOW)} fill="none" stroke="#ffff00" stroke-width="2.200"></path>
      <rect x="1003" y="229" width="5" height="3" fill="#c070d0"></rect>

      ${svg`
        <polyline points="${Z7(160,32)} ${Z7(415,145)}" fill="none" stroke="#cfcfcf" stroke-width="1.200" stroke-dasharray=${dots}></polyline>
        <polyline points="${Z7(5,327)} ${Z7(470,388)} ${Z7(650,410)}" fill="none" stroke="#cfcfcf" stroke-width="1.200" stroke-dasharray=${dots}></polyline>
        ${hl(135, 1052, 1287, "#55565e", 1, "8 3 2 3")}
        ${hl(172.500, 1140, 1288, "#55565e", 1, "8 3 2 3")}
        ${hl(216, 1106, 1288, "#55565e", 1, "8 3 2 3")}
        ${hl(237.500, 1217, 1290, "#a0303a", 2)}
        ${hl(250.500, 1217, 1290, "#a0303a", 2)}
        ${hl(262, 1217, 1290, "#a0303a", 2)}
        <line x1="1217" x2="1217" y1="237" y2="262" stroke="#c0203a" stroke-width="2"></line>
        <path d="M1217 262V270H1248V262" fill="none" stroke="#ffff00" stroke-width="2"></path>
        <line x1="1249" x2="1249" y1="242" y2="268" stroke="#111" stroke-width="2"></line>
        ${hl(242.500, 1220, 1249, "#111", 1.500)}
        ${hl(242.500, 1249, 1267, "#3a3ad0", 1.500)}
        ${hl(242.500, 1267, 1290, "#4fc3dc", 2)}
        ${hl(269.500, 1250, 1290, "#f4f4f4", 2)}
        ${hl(275, 1217, 1290, "#a8e000", 2)}
      `}
      <text x="1090" y="166.500" class="big">0.532 AB</text>
      <text x="1050" y="238" class="big">0.815 XA</text>
      <text x="1106" y="262" class="big">1.276 XA</text>
      <text x="1290" y="243" class="rd">1.270 AB</text>
      <text x="1290" y="256" class="rd">1.618 BC</text>
      <text x="1290" y="256" class="rd" opacity=".55">1.513 BC</text>
      <text x="1222" y="272" class="ax sm">1.130</text>
      <text x="1278" y="272" class="ax sm">1.618</text>
      <text x="1289" y="274" class="big">1.410 XA</text>
      <text x="1335" y="272" class="ax sm">.618</text>
      <text x="1289" y="282" class="big">2.240 BC</text>
      <text x="1289" y="288" class="big">1.270 XA</text>

      <line x1="287" x2="1490" y1="662.500" y2="662.500" stroke="#d8d8d8" stroke-dasharray="4 3"></line>
      <polyline points=${zp(ORANGE_A, 285, 590)} fill="none" stroke="#ffa500" stroke-width="2.600" stroke-linejoin="round"></polyline>
      <polyline points=${zp(ORANGE_B, 760, 590)} fill="none" stroke="#ffa500" stroke-width="2.600" stroke-linejoin="round"></polyline>

      ${PRICES.map(([t, y]) => svg`<line x1="1491" x2="1494" y1=${y} y2=${y} stroke="#ddd"></line><text x="1496" y=${y + 3} class="ax">${t}</text>`)}
      <rect x="1492" y="226" width="41" height="11" fill="#fff"></rect>
      <text x="1496" y="235" class="cur">10284.30</text>
      <text x="1494" y="596" class="ax">0.5707</text>
      <text x="1494" y="665" class="ax">0.5</text>
      <line x1="1491" x2="1493" y1="662" y2="662" stroke="#ddd"></line>
      <text x="1494" y="931" class="ax">0.2411</text>
      ${TIMES.map(([t, x]) => svg`<line x1=${x + 1.500} x2=${x + 1.500} y1="935" y2="940" stroke="#ddd"></line><text x=${x} y="947.500" class="ax">${t}</text>`)}
    </svg>`;
  }

  render() {
    return html`
      <div class="title">
        <div class="logo">JFD</div>
        <div class="title-text">1111703049: JFD-Demo - Demo Account - [.DE30Cash,H4]</div>
        <div class="wc">
          <svg class="resize" width="14" height="8" viewBox="0 0 14 8"><path d="M1 4l3.500-3v2h5V1L13 4 9.500 7V5h-5v2z" fill="#111"/></svg>
          <div class="wbtn"><svg width="11" height="2" viewBox="0 0 11 2"><path d="M0 1h11" stroke="#111"/></svg></div>
          <div class="wbtn"><svg width="11" height="11" viewBox="0 0 11 11"><rect x=".5" y=".5" width="10" height="10" fill="none" stroke="#111"/></svg></div>
          <div class="wbtn"><svg width="11" height="11" viewBox="0 0 11 11"><path d="M0 0l11 11M11 0L0 11" stroke="#111"/></svg></div>
        </div>
      </div>
      <div class="menu">
        <svg class="app" width="16" height="16" viewBox="0 0 16 16"><rect x="1.500" y="3.500" width="13" height="11" fill="#fff" stroke="#4a88c4"/><rect x="1" y="1" width="11" height="3" fill="#7fb0de"/><path d="M3 10l2-3 2 4 2-5 2 4 2-2" stroke="#3a70a8" fill="none"/></svg>
        ${MENU.map(([u, r, w]) => html`<div class="mi" style="width:${w}px"><u>${u}</u>${r}</div>`)}
        <div class="mdi">
          <span><svg width="9" height="9" viewBox="0 0 9 9"><path d="M1 7h7" stroke="#555" stroke-width="2"/></svg></span>
          <span><svg width="10" height="10" viewBox="0 0 10 10"><path d="M3.500 2.500V.5h6v5h-2M.5 3h6v6h-6zM.5 4h6" fill="none" stroke="#555"/></svg></span>
          <span><svg width="9" height="9" viewBox="0 0 9 9"><path d="M1 1l7 7M8 1L1 8" stroke="#555" stroke-width="1.800"/></svg></span>
        </div>
      </div>
      ${this.renderToolbars()}
      <div class="main">
        ${this.renderWatch()}
        <div class="right">
          ${this.renderChart()}
          <div class="tabs">
            ${TABS.map(([t, w]) => html`<div class="t" style="width:${w}px">${t}</div>`)}
            <div class="t-end"><span>A</span>
              <svg width="6" height="8" viewBox="0 0 6 8"><path d="M5 0v8L0 4z" fill="#999"/></svg>
              <svg width="6" height="8" viewBox="0 0 6 8"><path d="M0 0v8l6-4z" fill="#111"/></svg>
            </div>
          </div>
        </div>
      </div>
      <div class="status">
        <div class="st-help">For Help, press F1</div>
        ${STATUS.map(([t, w]) => html`<div class="st" style="width:${w}px">${t}</div>`)}
        <div class="st">
          <svg width="22" height="15" viewBox="0 0 22 15" shape-rendering="crispEdges"><path d="M1.500 15V5M3.500 15V4M5.500 15V4M7.500 15V3M9.500 15V3M11.500 15V2M13.500 15V2" stroke="#5b8f2c"/><path d="M15.500 15V2M17.500 15V1M19.500 15V1M21.500 15V1" stroke="#27406e"/></svg>
          13917/6 kb
        </div>
        <svg class="grip-r" width="12" height="12" viewBox="0 0 12 12"><path d="M11 1L1 11M11 4L4 11M11 7l-4 4" stroke="#aaa"/></svg>
      </div>`;
  }
}
